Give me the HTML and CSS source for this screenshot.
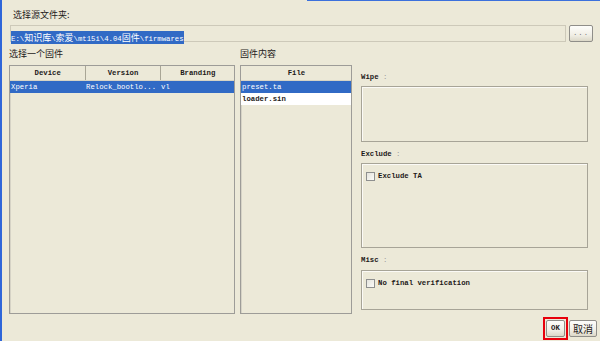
FILE: index.html
```html
<!DOCTYPE html>
<html lang="zh-CN">
<head>
  <meta charset="UTF-8" />
  <title>选择固件</title>
  <link rel="stylesheet" href="styles.css">
</head>
<body>
  <div class="window">
    <div class="topline"></div>
    <div class="source-label zh">选择源文件夹:</div>
    <div class="path-row">
      <div class="path-box"><span class="sel mono">E:\<span class="zh">知识库</span>\<span class="zh">索爱</span>\mt15i\4.04<span class="zh">固件</span>\firmwares</span></div>
      <button class="btn btn-browse mono">...</button>
    </div>

    <div class="panes">
      <section class="fw-list">
        <h2 class="pane-title zh">选择一个固件</h2>
        <div class="list-box">
          <table class="grid">
            <colgroup><col style="width:75px"><col style="width:75px"><col></colgroup>
            <thead>
              <tr><th>Device</th><th>Version</th><th>Branding</th></tr>
            </thead>
            <tbody>
              <tr class="selected"><td>Xperia</td><td>Relock_bootlo...</td><td>vl</td></tr>
            </tbody>
          </table>
        </div>
      </section>

      <section class="fw-files">
        <h2 class="pane-title zh">固件内容</h2>
        <div class="list-box">
          <table class="grid">
            <thead>
              <tr><th>File</th></tr>
            </thead>
            <tbody>
              <tr class="selected"><td>preset.ta</td></tr>
              <tr class="plain"><td>loader.sin</td></tr>
            </tbody>
          </table>
        </div>
      </section>

      <section class="options">
        <div class="opt-label mono">Wipe <span class="colon">:</span></div>
        <div class="opt-box wipe"></div>

        <div class="opt-label mono">Exclude <span class="colon">:</span></div>
        <div class="opt-box exclude">
          <label class="check mono"><span class="box"></span>Exclude TA</label>
        </div>

        <div class="opt-label mono">Misc <span class="colon">:</span></div>
        <div class="opt-box misc">
          <label class="check mono"><span class="box"></span>No final verification</label>
        </div>
      </section>
    </div>

    <div class="actions">
      <div class="focus-ring"><button class="btn btn-ok mono">OK</button></div>
      <button class="btn btn-cancel zh">取消</button>
    </div>
  </div>
</body>
</html>
```

FILE: styles.css
```css
:root{
  --face:#ece9d8;
  --sel:#316ac5;
  --line:#a7a497;
  --text:#1e1a1a;
}
*{box-sizing:border-box}
body{margin:0;background:var(--face);color:var(--text);overflow:hidden}

.zh{font-family:"Noto Sans CJK SC","Noto Sans",sans-serif;font-size:9px}
.mono{font-family:"Liberation Mono","DejaVu Sans Mono",monospace;font-size:7.3px}

.window{
  height:341px;
  border-left:2px solid #2f66d9;
  padding:0 3px 0 7px;
}
.topline{height:1px;margin-left:298px;margin-right:-3px;background:#3b70dc}

.source-label{margin:8px 0 0 4px;line-height:12px}

.path-row{display:flex;align-items:flex-start;gap:3px;margin:4px 4px 0 1px}
.path-box{
  flex:1;height:17px;padding-top:1px;
  border:1px solid #cdc9b9;
}
.sel{display:inline-block;background:var(--sel);color:#fff;line-height:13px;height:13px}
.sel .zh{line-height:13px}

.btn{
  margin:0;padding:0;
  border:1px solid #8f8e89;border-radius:2px;
  background:linear-gradient(#fdfdfb,#f1efe6 60%,#dcd8c8);
  color:var(--text);line-height:13px;
}
.btn-browse{width:24px;height:17px;color:#777;letter-spacing:1px}

.panes{display:flex;align-items:flex-start}
.fw-list{width:226px}
.fw-files{width:112px;margin-left:5px}
.options{width:227px;margin-left:9px;padding-top:29px}

.pane-title{margin:6px 0 5px;font-weight:normal;line-height:12px}

.list-box{
  height:249px;
  border:1px solid #9d9c98;
  box-shadow:inset 1px 1px 0 #d6d3c6;
  overflow:hidden;
}
.grid{width:100%;border-collapse:collapse;table-layout:fixed}
.grid th,.grid td{
  padding:0 0 0 1px;
  font-family:"Liberation Mono","DejaVu Sans Mono",monospace;
  font-size:7.3px;white-space:nowrap;overflow:hidden;
}
.grid th{
  height:14px;text-align:center;font-weight:bold;
  border-right:1px solid #a9a696;border-bottom:1px solid #d8d4c4;
  background:var(--face);
}
.grid th:last-child{border-right:none}
.grid td{height:12px;line-height:12px;font-weight:bold}
.grid .selected td{background:var(--sel);color:#fff;font-weight:normal}
.grid .plain td{background:#fff}

.opt-label{line-height:12px;font-weight:bold}
.colon{color:#9a9a9a;font-weight:normal}
.opt-box{
  margin:3px 0 6px;
  border:1px solid var(--line);
  box-shadow:inset 1px 1px 0 #fbfaf6;
}
.opt-box.wipe{height:56px}
.opt-box.exclude{height:85px;padding:8px 0 0 4px}
.opt-box.misc{height:40px;margin-bottom:0;padding:8px 0 0 4px;margin-top:4px}

.check{display:flex;align-items:center;gap:3px;font-weight:bold;line-height:9px}
.check .box{
  width:9px;height:9px;
  border:1px solid #8e8f8f;
  background:linear-gradient(135deg,#e4e3dd,#fbfbf8);
}

.actions{display:flex;justify-content:flex-end;align-items:center;gap:1px;margin-top:3px}
.focus-ring{border:2px solid #e8000b;padding:1px}
.btn-ok{display:block;width:19px;height:17px;font-weight:bold}
.btn-cancel{width:28px;height:17px;font-size:10px;line-height:13px}
```
